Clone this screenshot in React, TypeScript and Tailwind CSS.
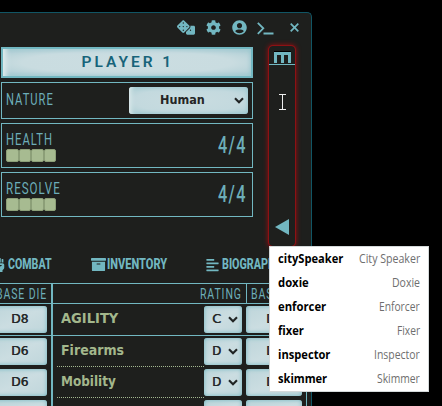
import { useLayoutEffect, useRef, useState } from "react";
import type { ReactNode } from "react";
import { FaAlignLeft, FaArchive, FaCog, FaDice, FaFistRaised, FaUserCircle } from "react-icons/fa";

/** One line of text, condensed or widened to fill the width of its box. */
function Fit({ className, children }: { className: string; children: ReactNode }) {
  const box = useRef<HTMLSpanElement>(null);
  const text = useRef<HTMLSpanElement>(null);
  const [scale, setScale] = useState(1);
  useLayoutEffect(() => {
    if (box.current && text.current) setScale(box.current.offsetWidth / text.current.offsetWidth);
  }, []);
  return (
    <span ref={box} className={`block shrink-0 whitespace-nowrap ${className}`}>
      <span ref={text} className="inline-block origin-left align-top" style={{ transform: `scaleX(${scale})` }}>
        {children}
      </span>
    </span>
  );
}

const condensed = "font-['Roboto',sans-serif]";
const wide = "font-['DejaVu_Sans',sans-serif]";
const plate = "bg-linear-to-br from-[#bdd5da] via-[#cbdde1] to-[#bfd6db] shadow-[inset_0_0_4px_#72b7c1]";

function Chevron() {
  return (
    <svg className="h-[7px] w-[10px]" viewBox="0 0 10 7" fill="none" stroke="#202424" strokeWidth="2.1">
      <path d="M1 1.2 5 5.2 9 1.2" />
    </svg>
  );
}

function Die({ children, className }: { children: ReactNode; className: string }) {
  return (
    <div className={`flex h-[27px] shrink-0 items-center justify-center rounded-[3px] pb-[2px] ${plate} ${wide} text-[13px] leading-[20px] text-[#252929] ${className}`}>
      <Fit className="w-[17px] [text-shadow:0.5px_0_#252929]">{children}</Fit>
    </div>
  );
}

function Row({ name, width, rating, die, ruled }: { name?: string; width?: string; rating: string; die: string; ruled?: boolean }) {
  return (
    <div className={`flex shrink-0 ${ruled ? "h-8 border-b border-[#72b7c1]" : "h-[31px]"}`}>
      <div className="w-[51px] shrink-0 pt-[2px]">
        <Die className="-ml-2 w-[55px]">{die}</Die>
      </div>
      <div className="w-[2px] shrink-0 bg-[#72b7c1]" />
      <div className={`ml-1 w-[147px] shrink-0 pt-[4px] pl-[4px] ${ruled ? "" : "border-b border-dotted border-[#a4b791]"}`}>
        {name && <Fit className={`${wide} text-[14px] leading-[20px] font-bold text-[#a3b78c] ${width}`}>{name}</Fit>}
      </div>
      <div className="pt-[2px]">
        <div className={`flex h-[27px] w-[38px] items-center justify-between rounded-[3px] pr-[4px] pl-[8px] ${plate} ${wide} text-[13px] leading-[20px] text-[#252929]`}>
          <Fit className="mb-[2px] w-[9px] [text-shadow:0.5px_0_#252929]">{rating}</Fit>
          <Chevron />
        </div>
      </div>
      <div className="ml-1 pt-[2px]">
        <Die className="w-[56px]">{die}</Die>
      </div>
    </div>
  );
}

function Meter({ label, width }: { label: string; width: string }) {
  return (
    <div className={`flex h-[45px] justify-between border border-[#72b7c1] pr-[5px] pl-[4px] ${condensed} text-[#6daeb9]`}>
      <div className="pt-[6px]">
        <Fit className={`text-[17px] leading-[19px] tracking-[1.5px] ${width}`}>{label}</Fit>
        <div className="flex">
          {[0, 1, 2, 3].map((i) => (
            <div key={i} className="h-[13px] w-[12.5px] rounded-[2px] border border-[#8c9f78] bg-[#a7bb91]" />
          ))}
        </div>
      </div>
      <Fit className="mt-[7px] w-[29px] text-[24px] leading-[29px] font-medium tracking-[2px]">4/4</Fit>
    </div>
  );
}

const roles = [
  ["citySpeaker", "w-[65px]", "City Speaker", "w-[61px]"],
  ["doxie", "w-[31px]", "Doxie", "w-[28px]"],
  ["enforcer", "w-[48px]", "Enforcer", "w-[41px]"],
  ["fixer", "w-[26px]", "Fixer", "w-[23px]"],
  ["inspector", "w-[52px]", "Inspector", "w-[46px]"],
  ["skimmer", "w-[49px]", "Skimmer", "w-[43px]"],
];

export default function App() {
  return (
    <div className="relative h-[406px] w-[442px] overflow-hidden bg-black pt-3">
      <div className="flex h-[400px] w-[312px] flex-col rounded-tr-[5px] border-t border-r border-[#115564] bg-[#1e1f1d]">
        <header className="flex h-[33px] shrink-0 items-start pt-[7px] pl-[177px] text-[#72b7c1]">
          <FaDice className="h-[15px] w-[18px]" />
          <FaCog className="ml-[11px] size-[15px]" />
          <FaUserCircle className="ml-[11px] size-[15px]" />
          <svg className="mt-[2px] ml-[10px] h-[13px] w-[17px]" viewBox="0 0 17 13" fill="none" stroke="currentColor" strokeWidth="1.8">
            <path d="M.8.8 6.3 6.3.8 11.8M6.5 11.5H16.5" />
          </svg>
          <svg className="mt-[3px] ml-[16px] size-[9px]" viewBox="0 0 9 9" fill="none" stroke="currentColor" strokeWidth="1.7">
            <path d="M.7.7 8.3 8.3M8.3.7.7 8.3" />
          </svg>
        </header>

        <div className="flex h-[200px] shrink-0">
          <div className="mt-px ml-px flex w-[252px] shrink-0 flex-col gap-1">
            <div className="flex h-[31px] justify-center border-2 border-[#72b7c1] bg-[radial-gradient(ellipse_at_50%_50%,#cbdde1_0,#c9dce0_60%,#a9cbd2_100%)] shadow-[inset_6px_0_5px_-3px_#e4edee,inset_0_0_5px_#8fc3cb]">
              <Fit className={`mt-[3px] ml-[2px] w-[93px] ${condensed} text-[15.5px] leading-[20px] font-semibold tracking-[3px] text-[#17647a]`}>
                PLAYER 1
              </Fit>
            </div>
            <div className="flex h-[37px] justify-between border border-[#72b7c1] pt-[4px] pr-[4px] pl-[4px]">
              <Fit className={`mt-[2px] w-[48px] ${condensed} text-[17px] leading-[20px] tracking-[1.5px] text-[#6daeb9]`}>NATURE</Fit>
              <div className="flex h-[27px] w-[119px] items-center justify-between rounded-[3px] bg-[radial-gradient(ellipse_at_50%_50%,#c9dce0_0,#c3d9de_65%,#acced4_100%)] pr-[4px] pl-[31px] shadow-[inset_5px_0_4px_-3px_#e4edee,inset_0_0_4px_#8fc3cb]">
                <Fit className={`mb-[2px] w-[45px] ${wide} text-[12px] leading-[18px] font-bold text-[#252525]`}>Human</Fit>
                <Chevron />
              </div>
            </div>
            <Meter label="HEALTH" width="w-[47px]" />
            <Meter label="RESOLVE" width="w-[55px]" />
          </div>
          <aside className="ml-[16px] flex w-[26px] shrink-0 flex-col items-center rounded-[4px] shadow-[0_0_0_1px_#8d1114,0_0_5px_1px_#a00c10]">
            <div className="flex h-[19px] w-full shrink-0 justify-center border-b border-[#72b7c1] pt-[5px] pl-[2px]">
              <svg className="h-[13px] w-[18px]" viewBox="0 0 18 13" fill="none">
                <path d="M0 .5H17" stroke="#000" />
                <path d="M0 2.5H17M1.5 2V12M8.5 2V12M15.5 2V12" stroke="#72b7c1" strokeWidth="3" />
              </svg>
            </div>
            <svg className="mt-auto mb-[11px] -ml-px h-[16px] w-[14px]" viewBox="0 0 14 16">
              <path d="M0 8 14 0V16Z" fill="#72b7c1" />
            </svg>
          </aside>
        </div>

        <nav className={`-ml-[8px] flex h-[37px] shrink-0 items-center ${condensed} text-[14.5px] leading-[20px] font-extrabold text-[#72b7c1]`}>
          <FaFistRaised className="h-[14px] w-[14px] shrink-0" />
          <Fit className="ml-[2px] w-[44px]">COMBAT</Fit>
          <FaArchive className="ml-[39px] h-[15px] w-[15px] shrink-0" />
          <Fit className="ml-[1px] w-[60px]">INVENTORY</Fit>
          <FaAlignLeft className="ml-[39px] h-[14px] w-[13px] shrink-0" />
          <Fit className="ml-[3px] w-[60px]">BIOGRAPHY</Fit>
        </nav>

        <section className="w-[307px] shrink-0 border-r border-[#72b7c1]">
          <div className={`flex h-[21px] border-y border-[#72b7c1] ${condensed} text-[14px] leading-[21px] text-[#6daeb9]`}>
            <div className="flex w-[51px] shrink-0 justify-end pr-[4px]">
              <Fit className="w-[51px] tracking-[1.2px]">BASE DIE</Fit>
            </div>
            <div className="w-[2px] shrink-0 bg-[#72b7c1]" />
            <div className="flex w-[193px] shrink-0 justify-end pr-[4px]">
              <Fit className="w-[42px] tracking-[1.2px]">RATING</Fit>
            </div>
            <div className="border-l border-[#72b7c1] pl-[4px]">
              <Fit className="w-[51px] tracking-[1.2px]">BASE DIE</Fit>
            </div>
          </div>
          <Row name="AGILITY" width="w-[57px]" rating="C" die="D8" ruled />
          <Row name="Firearms" width="w-[63px]" rating="D" die="D6" />
          <Row name="Mobility" width="w-[55px]" rating="D" die="D6" />
          <Row rating="D" die="D6" />
        </section>
      </div>

      <svg className="absolute top-[94px] left-[279px] h-[16px] w-[7px]" viewBox="0 0 7 16" fill="none" stroke="#eee">
        <path d="M0 .5H7M3.5 .5V15.5M0 15.5H7" />
      </svg>

      <div className="absolute top-[246px] left-[269px] w-[160px] border border-[#d4d9da] bg-white pr-[8px] pb-px pl-[8px] font-['Open_Sans',sans-serif] text-[12px] leading-[24px]">
        {roles.map(([id, idWidth, label, labelWidth]) => (
          <div key={id} className="flex h-6 justify-between last:h-[23px]">
            <Fit className={`font-bold text-black ${idWidth}`}>{id}</Fit>
            <Fit className={`text-[#6e6e6e] ${labelWidth}`}>{label}</Fit>
          </div>
        ))}
      </div>
    </div>
  );
}
